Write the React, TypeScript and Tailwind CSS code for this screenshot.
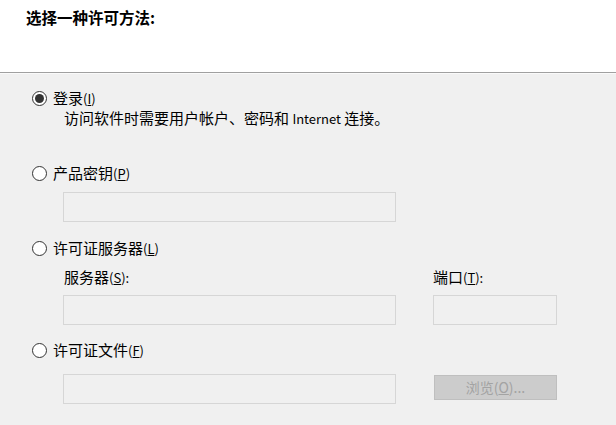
import React from 'react'

const font = { fontFamily: '"Noto Sans CJK SC", "Noto Sans", sans-serif' }

function Radio({ checked }: { checked?: boolean }) {
  return (
    <span className="flex h-[15px] w-[15px] shrink-0 items-center justify-center rounded-full border border-[#333333] bg-white">
      {checked && <span className="h-[9px] w-[9px] rounded-full bg-[#333333]" />}
    </span>
  )
}

function Option({ label, hotkey, checked }: { label: string; hotkey: string; checked?: boolean }) {
  return (
    <div className="flex h-5 items-center gap-[6px] pl-[32px]">
      <Radio checked={checked} />
      <span className="text-[15px] leading-5 text-black">
        {label}
        <span className="text-[13px]">
          (<span className="underline">{hotkey}</span>)
        </span>
      </span>
    </div>
  )
}

function Field({ className }: { className: string }) {
  return <div className={`h-[30px] border border-[#d6d6d6] bg-[#f0f0f0] ${className}`} />
}

export default function App() {
  return (
    <div className="flex h-[425px] w-[616px] flex-col overflow-hidden bg-[#f0f0f0]" style={font}>
      <div className="h-[73px] shrink-0 border-b border-[#a0a0a0] bg-white pl-[26px] pt-[7px]">
        <h1 className="text-[15.5px] font-bold leading-5 text-black">选择一种许可方法:</h1>
      </div>
      <div className="h-px shrink-0 bg-[#fafafa]" />

      <div className="mt-[14px]">
        <Option label="登录" hotkey="I" checked />
      </div>
      <p className="h-5 pl-[64px] text-[15px] leading-5 text-black">
        访问软件时需要用户帐户、密码和 <span className="text-[13px]">Internet</span> 连接。
      </p>

      <div className="mt-[35px]">
        <Option label="产品密钥" hotkey="P" />
      </div>
      <div className="mt-[9px] pl-[63px]">
        <Field className="w-[333px]" />
      </div>

      <div className="mt-[16px]">
        <Option label="许可证服务器" hotkey="L" />
      </div>
      <div className="mt-[9px] flex h-5 items-center pl-[64px] text-[15px] leading-5 text-black">
        <span className="w-[369px]">
          服务器<span className="text-[13px]">(<span className="underline">S</span>):</span>
        </span>
        <span>
          端口<span className="text-[13px]">(<span className="underline">T</span>):</span>
        </span>
      </div>
      <div className="mt-[8px] flex pl-[63px]">
        <Field className="w-[333px]" />
        <Field className="ml-[37px] w-[124px]" />
      </div>

      <div className="mt-[15px]">
        <Option label="许可证文件" hotkey="F" />
      </div>
      <div className="mt-[14px] flex items-start pl-[63px]">
        <Field className="w-[333px]" />
        <button
          type="button"
          disabled
          className="ml-[38px] mt-px flex h-[25px] w-[123px] items-center justify-center border border-[#bfbfbf] bg-[#cccccc] text-[14px] text-[#a3a3a3]"
        >
          浏览(<span className="underline">O</span>)...
        </button>
      </div>
    </div>
  )
}
